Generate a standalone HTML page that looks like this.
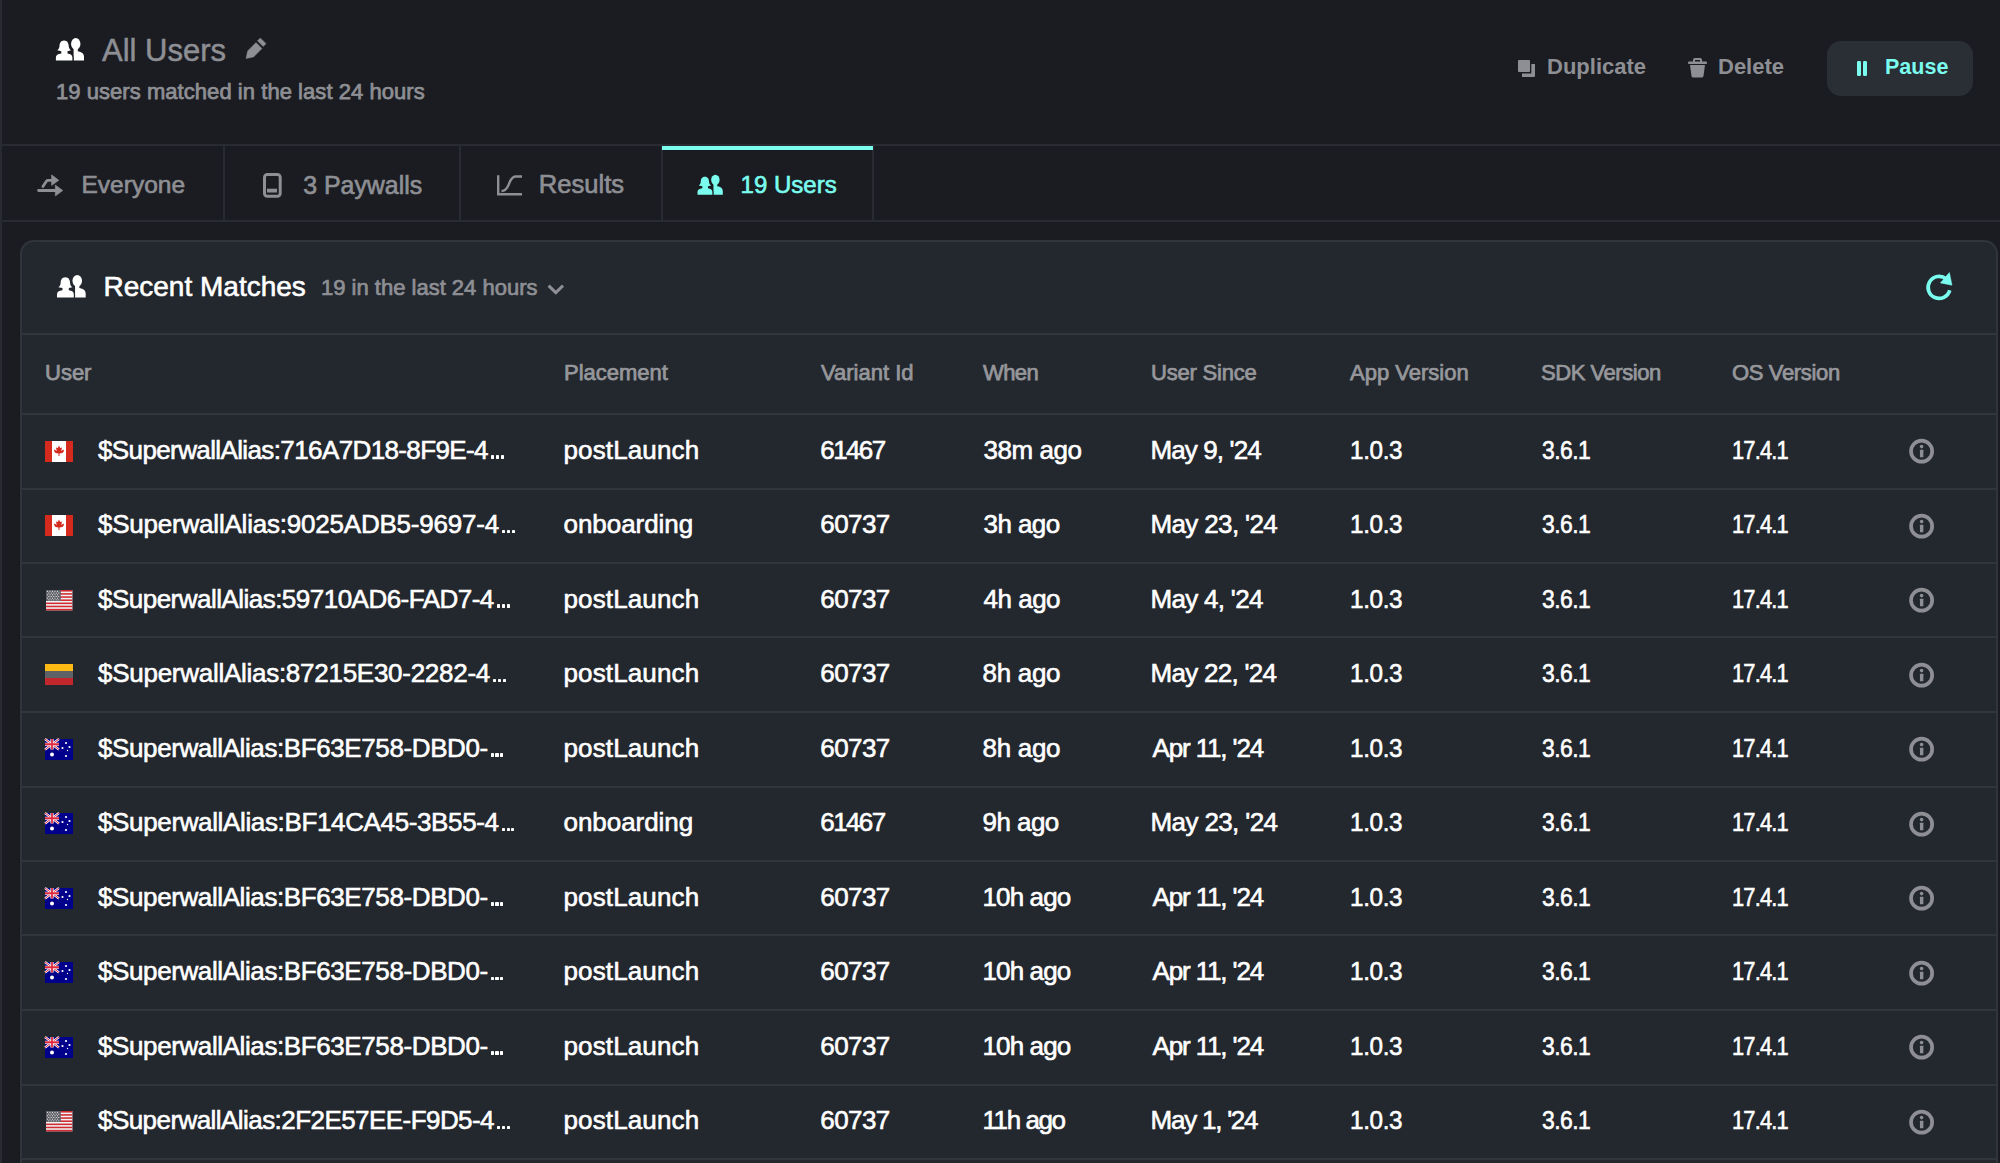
<!DOCTYPE html>
<html><head><meta charset="utf-8"><style>
*{margin:0;padding:0;box-sizing:border-box}
html,body{width:2000px;height:1163px;overflow:hidden;background:#1a1c21;font-family:"Liberation Sans", sans-serif}
.t{position:absolute;white-space:nowrap}
.i{position:absolute;overflow:visible}
.r{position:absolute}
</style></head><body>
<div class="r" style="left:0;top:0;width:2px;height:1163px;background:#282b32"></div>
<svg class="i" style="left:52.00px;top:34.00px" width="38.00" height="30.00" viewBox="0 0 38 30" preserveAspectRatio="none"><g fill="#ffffff"><ellipse cx="23.75" cy="9.9" rx="4.7" ry="5.8"/><path d="M21.6 13 H25.8 V17.2 Q31.8 18 32 22.5 V26.6 H21.6 Z"/></g><path fill="#ffffff" stroke="#1a1c21" stroke-width="2.4" paint-order="stroke" stroke-linejoin="round" d="M12.1 6.4 C8.6 6.4 7.6 9.3 7.5 12 C7.4 14 6.6 15.3 5.2 16.3 L9.3 17.2 L9.3 19.4 C5.6 19.8 3.9 21 3.9 23.6 L3.9 26.6 L20.4 26.6 L20.4 23.6 C20.4 21 18.7 19.8 15.5 19.4 L15.5 17.2 L19 16.3 C17.6 15.3 16.8 14 16.7 12 C16.6 9.3 15.6 6.4 12.1 6.4 Z"/></svg>
<div class="t" style="left:102px;top:34.76px;font-size:31px;line-height:31px;color:#8e8f94;font-weight:normal;-webkit-text-stroke:0.5px #8e8f94">All Users</div>
<svg class="i" style="left:245px;top:38px" width="21" height="21" viewBox="0 0 21 21"><path d="M11 4.6 L17 10.6 L8.6 19 L1 20.6 L2.6 13 Z M12.4 2.8 L14.8 0.4 Q15.3 -0.1 15.8 0.4 L20.6 5.2 Q21.1 5.7 20.6 6.2 L18.2 8.6 Z" fill="#8e8f94" stroke="#8e8f94" stroke-width="0.4" stroke-linejoin="round"/></svg>
<div class="t" style="left:56px;top:81.18px;font-size:22px;line-height:22px;color:#8e8f94;font-weight:normal;letter-spacing:0.05px;-webkit-text-stroke:0.75px #8e8f94">19 users matched in the last 24 hours</div>
<svg class="i" style="left:1516px;top:59px" width="20" height="19" viewBox="0 0 20 19"><rect x="2" y="1" width="12" height="12" rx="1" fill="#8e8f94"/><path d="M6 14.5 H15.3 V5 H19 V16.8 Q19 18 17.8 18 H6 Z" fill="#8e8f94"/></svg>
<div class="t" style="left:1547px;top:56.38px;font-size:22px;line-height:22px;color:#8e8f94;font-weight:bold;">Duplicate</div>
<svg class="i" style="left:1688px;top:58px" width="19" height="20" viewBox="0 0 19 20"><rect x="0" y="3.5" width="19" height="2.5" rx="1" fill="#8e8f94"/><path d="M6 4 V2 Q6 1 7 1 H12 Q13 1 13 2 V4" stroke="#8e8f94" stroke-width="2" fill="none"/><path d="M2 7 H17 L15.5 18 Q15.3 19.6 13.5 19.6 H5.5 Q3.7 19.6 3.5 18 Z" fill="#8e8f94"/></svg>
<div class="t" style="left:1718px;top:56.38px;font-size:22px;line-height:22px;color:#8e8f94;font-weight:bold;">Delete</div>
<div class="r" style="left:1827px;top:41px;width:146px;height:55px;border-radius:14px;background:#2a2e35"></div>
<div class="r" style="left:1857px;top:60.6px;width:4.2px;height:15.6px;background:#7afdef;border-radius:1.2px"></div><div class="r" style="left:1863.3px;top:60.6px;width:4.1px;height:15.6px;background:#7afdef;border-radius:1.2px"></div>
<div class="t" style="left:1885px;top:56.80px;font-size:21.5px;line-height:21.5px;color:#7afdef;font-weight:bold;">Pause</div>
<div class="r" style="left:0;top:144px;width:2000px;height:2px;background:#282b32"></div>
<div class="r" style="left:0;top:220px;width:2000px;height:2px;background:#282b32"></div>
<div class="r" style="left:223px;top:144px;width:2px;height:78px;background:#282b32"></div>
<div class="r" style="left:459px;top:144px;width:2px;height:78px;background:#282b32"></div>
<div class="r" style="left:661px;top:144px;width:2px;height:78px;background:#282b32"></div>
<div class="r" style="left:872px;top:144px;width:2px;height:78px;background:#282b32"></div>
<div class="r" style="left:662px;top:146px;width:211px;height:3.5px;background:#7afdef"></div>
<svg class="i" style="left:34px;top:170px" width="32" height="30" viewBox="0 0 32 30"><g stroke="#8e8f94" stroke-width="2.8" fill="none" stroke-linecap="round"><path d="M4.6 20.5 H22.5"/><path d="M8.9 16.6 L12.6 10.9 Q13 10.3 13.8 10.3 H18.5"/></g><path d="M21.3 15 L28.8 20.5 L21.3 26 Z M17.6 4.8 L24.8 10.3 L17.6 15.4 Z" fill="#8e8f94" stroke="#8e8f94" stroke-width="0.6" stroke-linejoin="round"/></svg>
<div class="t" style="left:81.5px;top:172.86px;font-size:24.5px;line-height:24.5px;color:#8e8f94;font-weight:normal;-webkit-text-stroke:0.65px #8e8f94">Everyone</div>
<svg class="i" style="left:263px;top:172.8px" width="19" height="25" viewBox="0 0 19 25"><rect x="1.5" y="1.5" width="15.7" height="21.7" rx="2.8" fill="none" stroke="#8e8f94" stroke-width="3"/><rect x="4" y="15.7" width="10" height="3.8" fill="#8e8f94"/></svg>
<div class="t" style="left:303.2px;top:172.52px;font-size:24.9px;line-height:24.9px;color:#8e8f94;font-weight:normal;-webkit-text-stroke:0.65px #8e8f94">3 Paywalls</div>
<svg class="i" style="left:496px;top:174px" width="27" height="23" viewBox="0 0 27 23"><g fill="none" stroke="#8e8f94" stroke-width="2.4"><path d="M2.2 1.2 V20.3 H26"/><path d="M5.5 17 Q10 17 12.5 11 Q15.5 2.5 19.5 2.5 H26"/></g></svg>
<div class="t" style="left:538.8px;top:171.93px;font-size:25.6px;line-height:25.6px;color:#8e8f94;font-weight:normal;-webkit-text-stroke:0.65px #8e8f94">Results</div>
<svg class="i" style="left:694.39px;top:171.36px" width="34.21" height="26.67" viewBox="0 0 38 30" preserveAspectRatio="none"><g fill="#7afdef"><ellipse cx="23.75" cy="9.9" rx="4.7" ry="5.8"/><path d="M21.6 13 H25.8 V17.2 Q31.8 18 32 22.5 V26.6 H21.6 Z"/></g><path fill="#7afdef" stroke="#1a1c21" stroke-width="2.4" paint-order="stroke" stroke-linejoin="round" d="M12.1 6.4 C8.6 6.4 7.6 9.3 7.5 12 C7.4 14 6.6 15.3 5.2 16.3 L9.3 17.2 L9.3 19.4 C5.6 19.8 3.9 21 3.9 23.6 L3.9 26.6 L20.4 26.6 L20.4 23.6 C20.4 21 18.7 19.8 15.5 19.4 L15.5 17.2 L19 16.3 C17.6 15.3 16.8 14 16.7 12 C16.6 9.3 15.6 6.4 12.1 6.4 Z"/></svg>
<div class="t" style="left:740.6px;top:173.28px;font-size:24px;line-height:24px;color:#7afdef;font-weight:normal;-webkit-text-stroke:0.6px #7afdef">19 Users</div>
<div class="r" style="left:20px;top:240px;width:1978px;height:1000px;border:2px solid #30343b;border-radius:14px;background:#23272e"></div>
<svg class="i" style="left:53.02px;top:271.32px" width="38.81" height="29.87" viewBox="0 0 38 30" preserveAspectRatio="none"><g fill="#ffffff"><ellipse cx="23.75" cy="9.9" rx="4.7" ry="5.8"/><path d="M21.6 13 H25.8 V17.2 Q31.8 18 32 22.5 V26.6 H21.6 Z"/></g><path fill="#ffffff" stroke="#23272e" stroke-width="2.4" paint-order="stroke" stroke-linejoin="round" d="M12.1 6.4 C8.6 6.4 7.6 9.3 7.5 12 C7.4 14 6.6 15.3 5.2 16.3 L9.3 17.2 L9.3 19.4 C5.6 19.8 3.9 21 3.9 23.6 L3.9 26.6 L20.4 26.6 L20.4 23.6 C20.4 21 18.7 19.8 15.5 19.4 L15.5 17.2 L19 16.3 C17.6 15.3 16.8 14 16.7 12 C16.6 9.3 15.6 6.4 12.1 6.4 Z"/></svg>
<div class="t" style="left:103.5px;top:273.30px;font-size:28px;line-height:28px;color:#ffffff;font-weight:normal;-webkit-text-stroke:0.6px #ffffff">Recent Matches</div>
<div class="t" style="left:321px;top:277.38px;font-size:22px;line-height:22px;color:#8e8f94;font-weight:normal;-webkit-text-stroke:0.7px #8e8f94">19 in the last 24 hours</div>
<svg class="i" style="left:547px;top:282px" width="18" height="12" viewBox="0 0 18 12"><path d="M1.6 3.6 L8.8 10.6 L16 3.6" fill="none" stroke="#8e8f94" stroke-width="3"/></svg>
<svg class="i" style="left:1915px;top:262px" width="50" height="50" viewBox="0 0 50 50"><path d="M34.73 28.25 A11 11 0 1 1 31.17 16.97" fill="none" stroke="#7afdef" stroke-width="3.7"/><path d="M34.4 10.5 L37 23.2 L25.4 20.9 Z" fill="#7afdef" stroke="#7afdef" stroke-width="0.5" stroke-linejoin="round"/></svg>
<div class="r" style="left:22px;top:333px;width:1974px;height:2px;background:#32353c"></div>
<div class="t" style="left:45px;top:362.28px;font-size:22px;line-height:22px;color:#96979b;font-weight:normal;-webkit-text-stroke:0.75px #96979b">User</div>
<div class="t" style="left:564px;top:362.28px;font-size:22px;line-height:22px;color:#96979b;font-weight:normal;-webkit-text-stroke:0.75px #96979b">Placement</div>
<div class="t" style="left:821px;top:362.28px;font-size:22px;line-height:22px;color:#96979b;font-weight:normal;-webkit-text-stroke:0.75px #96979b">Variant Id</div>
<div class="t" style="left:983px;top:362.28px;font-size:22px;line-height:22px;color:#96979b;font-weight:normal;letter-spacing:-0.6px;-webkit-text-stroke:0.75px #96979b">When</div>
<div class="t" style="left:1151px;top:362.28px;font-size:22px;line-height:22px;color:#96979b;font-weight:normal;letter-spacing:-0.2px;-webkit-text-stroke:0.75px #96979b">User Since</div>
<div class="t" style="left:1350px;top:362.28px;font-size:22px;line-height:22px;color:#96979b;font-weight:normal;-webkit-text-stroke:0.75px #96979b">App Version</div>
<div class="t" style="left:1541px;top:362.28px;font-size:22px;line-height:22px;color:#96979b;font-weight:normal;letter-spacing:-0.45px;-webkit-text-stroke:0.75px #96979b">SDK Version</div>
<div class="t" style="left:1732px;top:362.28px;font-size:22px;line-height:22px;color:#96979b;font-weight:normal;letter-spacing:-0.35px;-webkit-text-stroke:0.75px #96979b">OS Version</div>
<div class="r" style="left:22px;top:413px;width:1974px;height:2px;background:#32353c"></div>
<svg class="i" style="left:45px;top:441px" width="28" height="21" viewBox="0 0 28 21"><rect width="28" height="21" fill="#fff"/><rect width="7" height="21" fill="#d52b1e"/><rect x="21" width="7" height="21" fill="#d52b1e"/><path d="M14 4.5 L15.2 7 L17 6.5 L16.3 10 L18.5 8.5 L19 10 L17.5 12 L14.5 12.5 V15 H13.5 V12.5 L10.5 12 L9 10 L9.5 8.5 L11.7 10 L11 6.5 L12.8 7 Z" fill="#d52b1e"/></svg>
<div class="t" style="left:98.0px;top:436.74px;font-size:26px;line-height:26px;color:#ffffff;font-weight:normal;letter-spacing:-0.615px;-webkit-text-stroke:0.6px #ffffff">$SuperwallAlias:716A7D18-8F9E-4</div>
<div class="r" style="left:491.20px;top:455.45px;width:3.1px;height:3.1px;background:#ffffff;border-radius:0.4px"></div>
<div class="r" style="left:496.05px;top:455.45px;width:3.1px;height:3.1px;background:#ffffff;border-radius:0.4px"></div>
<div class="r" style="left:500.90px;top:455.45px;width:3.1px;height:3.1px;background:#ffffff;border-radius:0.4px"></div>
<div class="t" style="left:563.5px;top:436.74px;font-size:26px;line-height:26px;color:#ffffff;font-weight:normal;letter-spacing:0.135px;-webkit-text-stroke:0.6px #ffffff">postLaunch</div>
<div class="t" style="left:820.3px;top:436.74px;font-size:26px;line-height:26px;color:#ffffff;font-weight:normal;letter-spacing:-1.610px;-webkit-text-stroke:0.6px #ffffff">61467</div>
<div class="t" style="left:983.5px;top:436.74px;font-size:26px;line-height:26px;color:#ffffff;font-weight:normal;letter-spacing:-0.470px;-webkit-text-stroke:0.6px #ffffff">38m ago</div>
<div class="t" style="left:1150.5px;top:436.74px;font-size:26px;line-height:26px;color:#ffffff;font-weight:normal;letter-spacing:-0.886px;-webkit-text-stroke:0.6px #ffffff">May 9, '24</div>
<div class="t" style="left:1350.05px;top:436.74px;font-size:26px;line-height:26px;color:#ffffff;font-weight:normal;letter-spacing:-0.4px;transform:scaleX(0.9338);transform-origin:0 0;-webkit-text-stroke:0.6px #ffffff">1.0.3</div>
<div class="t" style="left:1541.96px;top:436.74px;font-size:26px;line-height:26px;color:#ffffff;font-weight:normal;letter-spacing:-0.6px;transform:scaleX(0.8818);transform-origin:0 0;-webkit-text-stroke:0.6px #ffffff">3.6.1</div>
<div class="t" style="left:1732.21px;top:436.74px;font-size:26px;line-height:26px;color:#ffffff;font-weight:normal;letter-spacing:-1.0px;transform:scaleX(0.8415);transform-origin:0 0;-webkit-text-stroke:0.6px #ffffff">17.4.1</div>
<svg class="i" style="left:1908px;top:438.25px" width="27" height="27" viewBox="0 0 27 27"><circle cx="13.6" cy="13.15" r="10.55" fill="none" stroke="#8e8f94" stroke-width="3.7"/><rect x="11.95" y="11.75" width="3.4" height="7.6" rx="0.5" fill="#8e8f94"/><circle cx="13.6" cy="8.6" r="1.8" fill="#8e8f94"/></svg>
<div class="r" style="left:22px;top:488px;width:1974px;height:2px;background:#32353c"></div>
<svg class="i" style="left:45px;top:515px" width="28" height="21" viewBox="0 0 28 21"><rect width="28" height="21" fill="#fff"/><rect width="7" height="21" fill="#d52b1e"/><rect x="21" width="7" height="21" fill="#d52b1e"/><path d="M14 4.5 L15.2 7 L17 6.5 L16.3 10 L18.5 8.5 L19 10 L17.5 12 L14.5 12.5 V15 H13.5 V12.5 L10.5 12 L9 10 L9.5 8.5 L11.7 10 L11 6.5 L12.8 7 Z" fill="#d52b1e"/></svg>
<div class="t" style="left:98.0px;top:511.24px;font-size:26px;line-height:26px;color:#ffffff;font-weight:normal;letter-spacing:-0.214px;-webkit-text-stroke:0.6px #ffffff">$SuperwallAlias:9025ADB5-9697-4</div>
<div class="r" style="left:501.80px;top:529.95px;width:3.1px;height:3.1px;background:#ffffff;border-radius:0.4px"></div>
<div class="r" style="left:506.65px;top:529.95px;width:3.1px;height:3.1px;background:#ffffff;border-radius:0.4px"></div>
<div class="r" style="left:511.50px;top:529.95px;width:3.1px;height:3.1px;background:#ffffff;border-radius:0.4px"></div>
<div class="t" style="left:563.5px;top:511.24px;font-size:26px;line-height:26px;color:#ffffff;font-weight:normal;letter-spacing:-0.050px;-webkit-text-stroke:0.6px #ffffff">onboarding</div>
<div class="t" style="left:820.3px;top:511.24px;font-size:26px;line-height:26px;color:#ffffff;font-weight:normal;letter-spacing:-0.585px;-webkit-text-stroke:0.6px #ffffff">60737</div>
<div class="t" style="left:983.5px;top:511.24px;font-size:26px;line-height:26px;color:#ffffff;font-weight:normal;letter-spacing:-0.573px;-webkit-text-stroke:0.6px #ffffff">3h ago</div>
<div class="t" style="left:1150.5px;top:511.24px;font-size:26px;line-height:26px;color:#ffffff;font-weight:normal;letter-spacing:-0.643px;-webkit-text-stroke:0.6px #ffffff">May 23, '24</div>
<div class="t" style="left:1350.05px;top:511.24px;font-size:26px;line-height:26px;color:#ffffff;font-weight:normal;letter-spacing:-0.4px;transform:scaleX(0.9338);transform-origin:0 0;-webkit-text-stroke:0.6px #ffffff">1.0.3</div>
<div class="t" style="left:1541.96px;top:511.24px;font-size:26px;line-height:26px;color:#ffffff;font-weight:normal;letter-spacing:-0.6px;transform:scaleX(0.8818);transform-origin:0 0;-webkit-text-stroke:0.6px #ffffff">3.6.1</div>
<div class="t" style="left:1732.21px;top:511.24px;font-size:26px;line-height:26px;color:#ffffff;font-weight:normal;letter-spacing:-1.0px;transform:scaleX(0.8415);transform-origin:0 0;-webkit-text-stroke:0.6px #ffffff">17.4.1</div>
<svg class="i" style="left:1908px;top:512.75px" width="27" height="27" viewBox="0 0 27 27"><circle cx="13.6" cy="13.15" r="10.55" fill="none" stroke="#8e8f94" stroke-width="3.7"/><rect x="11.95" y="11.75" width="3.4" height="7.6" rx="0.5" fill="#8e8f94"/><circle cx="13.6" cy="8.6" r="1.8" fill="#8e8f94"/></svg>
<div class="r" style="left:22px;top:562px;width:1974px;height:2px;background:#32353c"></div>
<svg class="i" style="left:46px;top:590.2px" width="26.4" height="20.4" viewBox="0 0 26.4 20.4"><rect width="26.4" height="20.4" fill="#eef4f4"/><rect y="0.00" width="26.4" height="1.57" fill="#d22a30"/><rect y="3.14" width="26.4" height="1.57" fill="#d22a30"/><rect y="6.28" width="26.4" height="1.57" fill="#d22a30"/><rect y="9.42" width="26.4" height="1.57" fill="#d22a30"/><rect y="12.55" width="26.4" height="1.57" fill="#d22a30"/><rect y="15.69" width="26.4" height="1.57" fill="#d22a30"/><rect y="18.83" width="26.4" height="1.57" fill="#d22a30"/><rect width="14.8" height="11" fill="#606168"/><rect x="1.00" y="0.90" width="1" height="1" fill="#e8e8e8"/><rect x="3.50" y="0.90" width="1" height="1" fill="#e8e8e8"/><rect x="6.00" y="0.90" width="1" height="1" fill="#e8e8e8"/><rect x="8.50" y="0.90" width="1" height="1" fill="#e8e8e8"/><rect x="11.00" y="0.90" width="1" height="1" fill="#e8e8e8"/><rect x="2.25" y="2.60" width="1" height="1" fill="#e8e8e8"/><rect x="4.75" y="2.60" width="1" height="1" fill="#e8e8e8"/><rect x="7.25" y="2.60" width="1" height="1" fill="#e8e8e8"/><rect x="9.75" y="2.60" width="1" height="1" fill="#e8e8e8"/><rect x="12.25" y="2.60" width="1" height="1" fill="#e8e8e8"/><rect x="1.00" y="4.30" width="1" height="1" fill="#e8e8e8"/><rect x="3.50" y="4.30" width="1" height="1" fill="#e8e8e8"/><rect x="6.00" y="4.30" width="1" height="1" fill="#e8e8e8"/><rect x="8.50" y="4.30" width="1" height="1" fill="#e8e8e8"/><rect x="11.00" y="4.30" width="1" height="1" fill="#e8e8e8"/><rect x="2.25" y="6.00" width="1" height="1" fill="#e8e8e8"/><rect x="4.75" y="6.00" width="1" height="1" fill="#e8e8e8"/><rect x="7.25" y="6.00" width="1" height="1" fill="#e8e8e8"/><rect x="9.75" y="6.00" width="1" height="1" fill="#e8e8e8"/><rect x="12.25" y="6.00" width="1" height="1" fill="#e8e8e8"/><rect x="1.00" y="7.70" width="1" height="1" fill="#e8e8e8"/><rect x="3.50" y="7.70" width="1" height="1" fill="#e8e8e8"/><rect x="6.00" y="7.70" width="1" height="1" fill="#e8e8e8"/><rect x="8.50" y="7.70" width="1" height="1" fill="#e8e8e8"/><rect x="11.00" y="7.70" width="1" height="1" fill="#e8e8e8"/><rect x="2.25" y="9.40" width="1" height="1" fill="#e8e8e8"/><rect x="4.75" y="9.40" width="1" height="1" fill="#e8e8e8"/><rect x="7.25" y="9.40" width="1" height="1" fill="#e8e8e8"/><rect x="9.75" y="9.40" width="1" height="1" fill="#e8e8e8"/><rect x="12.25" y="9.40" width="1" height="1" fill="#e8e8e8"/></svg>
<div class="t" style="left:98.0px;top:585.74px;font-size:26px;line-height:26px;color:#ffffff;font-weight:normal;letter-spacing:-0.521px;-webkit-text-stroke:0.6px #ffffff">$SuperwallAlias:59710AD6-FAD7-4</div>
<div class="r" style="left:496.90px;top:604.45px;width:3.1px;height:3.1px;background:#ffffff;border-radius:0.4px"></div>
<div class="r" style="left:501.75px;top:604.45px;width:3.1px;height:3.1px;background:#ffffff;border-radius:0.4px"></div>
<div class="r" style="left:506.60px;top:604.45px;width:3.1px;height:3.1px;background:#ffffff;border-radius:0.4px"></div>
<div class="t" style="left:563.5px;top:585.74px;font-size:26px;line-height:26px;color:#ffffff;font-weight:normal;letter-spacing:0.135px;-webkit-text-stroke:0.6px #ffffff">postLaunch</div>
<div class="t" style="left:820.3px;top:585.74px;font-size:26px;line-height:26px;color:#ffffff;font-weight:normal;letter-spacing:-0.585px;-webkit-text-stroke:0.6px #ffffff">60737</div>
<div class="t" style="left:983.5px;top:585.74px;font-size:26px;line-height:26px;color:#ffffff;font-weight:normal;letter-spacing:-0.493px;-webkit-text-stroke:0.6px #ffffff">4h ago</div>
<div class="t" style="left:1150.5px;top:585.74px;font-size:26px;line-height:26px;color:#ffffff;font-weight:normal;letter-spacing:-0.697px;-webkit-text-stroke:0.6px #ffffff">May 4, '24</div>
<div class="t" style="left:1350.05px;top:585.74px;font-size:26px;line-height:26px;color:#ffffff;font-weight:normal;letter-spacing:-0.4px;transform:scaleX(0.9338);transform-origin:0 0;-webkit-text-stroke:0.6px #ffffff">1.0.3</div>
<div class="t" style="left:1541.96px;top:585.74px;font-size:26px;line-height:26px;color:#ffffff;font-weight:normal;letter-spacing:-0.6px;transform:scaleX(0.8818);transform-origin:0 0;-webkit-text-stroke:0.6px #ffffff">3.6.1</div>
<div class="t" style="left:1732.21px;top:585.74px;font-size:26px;line-height:26px;color:#ffffff;font-weight:normal;letter-spacing:-1.0px;transform:scaleX(0.8415);transform-origin:0 0;-webkit-text-stroke:0.6px #ffffff">17.4.1</div>
<svg class="i" style="left:1908px;top:587.25px" width="27" height="27" viewBox="0 0 27 27"><circle cx="13.6" cy="13.15" r="10.55" fill="none" stroke="#8e8f94" stroke-width="3.7"/><rect x="11.95" y="11.75" width="3.4" height="7.6" rx="0.5" fill="#8e8f94"/><circle cx="13.6" cy="8.6" r="1.8" fill="#8e8f94"/></svg>
<div class="r" style="left:22px;top:636px;width:1974px;height:2px;background:#32353c"></div>
<svg class="i" style="left:45px;top:664px" width="28" height="21" viewBox="0 0 28 21"><rect width="28" height="7" fill="#fdb913"/><rect y="7" width="28" height="7" fill="#5e6166"/><rect y="14" width="28" height="7" fill="#c1272d"/></svg>
<div class="t" style="left:98.0px;top:660.24px;font-size:26px;line-height:26px;color:#ffffff;font-weight:normal;letter-spacing:-0.271px;-webkit-text-stroke:0.6px #ffffff">$SuperwallAlias:87215E30-2282-4</div>
<div class="r" style="left:492.90px;top:678.95px;width:3.1px;height:3.1px;background:#ffffff;border-radius:0.4px"></div>
<div class="r" style="left:497.75px;top:678.95px;width:3.1px;height:3.1px;background:#ffffff;border-radius:0.4px"></div>
<div class="r" style="left:502.60px;top:678.95px;width:3.1px;height:3.1px;background:#ffffff;border-radius:0.4px"></div>
<div class="t" style="left:563.5px;top:660.24px;font-size:26px;line-height:26px;color:#ffffff;font-weight:normal;letter-spacing:0.135px;-webkit-text-stroke:0.6px #ffffff">postLaunch</div>
<div class="t" style="left:820.3px;top:660.24px;font-size:26px;line-height:26px;color:#ffffff;font-weight:normal;letter-spacing:-0.585px;-webkit-text-stroke:0.6px #ffffff">60737</div>
<div class="t" style="left:982.5px;top:660.24px;font-size:26px;line-height:26px;color:#ffffff;font-weight:normal;letter-spacing:-0.293px;-webkit-text-stroke:0.6px #ffffff">8h ago</div>
<div class="t" style="left:1150.5px;top:660.24px;font-size:26px;line-height:26px;color:#ffffff;font-weight:normal;letter-spacing:-0.723px;-webkit-text-stroke:0.6px #ffffff">May 22, '24</div>
<div class="t" style="left:1350.05px;top:660.24px;font-size:26px;line-height:26px;color:#ffffff;font-weight:normal;letter-spacing:-0.4px;transform:scaleX(0.9338);transform-origin:0 0;-webkit-text-stroke:0.6px #ffffff">1.0.3</div>
<div class="t" style="left:1541.96px;top:660.24px;font-size:26px;line-height:26px;color:#ffffff;font-weight:normal;letter-spacing:-0.6px;transform:scaleX(0.8818);transform-origin:0 0;-webkit-text-stroke:0.6px #ffffff">3.6.1</div>
<div class="t" style="left:1732.21px;top:660.24px;font-size:26px;line-height:26px;color:#ffffff;font-weight:normal;letter-spacing:-1.0px;transform:scaleX(0.8415);transform-origin:0 0;-webkit-text-stroke:0.6px #ffffff">17.4.1</div>
<svg class="i" style="left:1908px;top:661.75px" width="27" height="27" viewBox="0 0 27 27"><circle cx="13.6" cy="13.15" r="10.55" fill="none" stroke="#8e8f94" stroke-width="3.7"/><rect x="11.95" y="11.75" width="3.4" height="7.6" rx="0.5" fill="#8e8f94"/><circle cx="13.6" cy="8.6" r="1.8" fill="#8e8f94"/></svg>
<div class="r" style="left:22px;top:711px;width:1974px;height:2px;background:#32353c"></div>
<svg class="i" style="left:45px;top:739px" width="28" height="21" viewBox="0 0 28 21"><rect width="28" height="21" fill="#00008b"/><g stroke="#fff" stroke-width="2.2"><path d="M0 0 L14 10.5 M14 0 L0 10.5"/></g><g stroke="#e0283c" stroke-width="1"><path d="M0 0 L14 10.5 M14 0 L0 10.5"/></g><path d="M7 0 V10.5 M0 5.25 H14" stroke="#fff" stroke-width="3.2"/><path d="M7 0 V10.5 M0 5.25 H14" stroke="#e0283c" stroke-width="1.8"/><circle cx="7" cy="15.5" r="2" fill="#fff"/><circle cx="21" cy="4" r="1.1" fill="#fff"/><circle cx="24.5" cy="8" r="1.1" fill="#fff"/><circle cx="17.5" cy="9" r="1.1" fill="#fff"/><circle cx="21" cy="17" r="1.1" fill="#fff"/><circle cx="22.5" cy="11.5" r="0.7" fill="#fff"/></svg>
<div class="t" style="left:98.0px;top:734.74px;font-size:26px;line-height:26px;color:#ffffff;font-weight:normal;letter-spacing:-0.399px;-webkit-text-stroke:0.6px #ffffff">$SuperwallAlias:BF63E758-DBD0-</div>
<div class="r" style="left:490.60px;top:753.45px;width:3.1px;height:3.1px;background:#ffffff;border-radius:0.4px"></div>
<div class="r" style="left:495.45px;top:753.45px;width:3.1px;height:3.1px;background:#ffffff;border-radius:0.4px"></div>
<div class="r" style="left:500.30px;top:753.45px;width:3.1px;height:3.1px;background:#ffffff;border-radius:0.4px"></div>
<div class="t" style="left:563.5px;top:734.74px;font-size:26px;line-height:26px;color:#ffffff;font-weight:normal;letter-spacing:0.135px;-webkit-text-stroke:0.6px #ffffff">postLaunch</div>
<div class="t" style="left:820.3px;top:734.74px;font-size:26px;line-height:26px;color:#ffffff;font-weight:normal;letter-spacing:-0.585px;-webkit-text-stroke:0.6px #ffffff">60737</div>
<div class="t" style="left:982.5px;top:734.74px;font-size:26px;line-height:26px;color:#ffffff;font-weight:normal;letter-spacing:-0.293px;-webkit-text-stroke:0.6px #ffffff">8h ago</div>
<div class="t" style="left:1152.5px;top:734.74px;font-size:26px;line-height:26px;color:#ffffff;font-weight:normal;letter-spacing:-1.134px;-webkit-text-stroke:0.6px #ffffff">Apr 11, '24</div>
<div class="t" style="left:1350.05px;top:734.74px;font-size:26px;line-height:26px;color:#ffffff;font-weight:normal;letter-spacing:-0.4px;transform:scaleX(0.9338);transform-origin:0 0;-webkit-text-stroke:0.6px #ffffff">1.0.3</div>
<div class="t" style="left:1541.96px;top:734.74px;font-size:26px;line-height:26px;color:#ffffff;font-weight:normal;letter-spacing:-0.6px;transform:scaleX(0.8818);transform-origin:0 0;-webkit-text-stroke:0.6px #ffffff">3.6.1</div>
<div class="t" style="left:1732.21px;top:734.74px;font-size:26px;line-height:26px;color:#ffffff;font-weight:normal;letter-spacing:-1.0px;transform:scaleX(0.8415);transform-origin:0 0;-webkit-text-stroke:0.6px #ffffff">17.4.1</div>
<svg class="i" style="left:1908px;top:736.25px" width="27" height="27" viewBox="0 0 27 27"><circle cx="13.6" cy="13.15" r="10.55" fill="none" stroke="#8e8f94" stroke-width="3.7"/><rect x="11.95" y="11.75" width="3.4" height="7.6" rx="0.5" fill="#8e8f94"/><circle cx="13.6" cy="8.6" r="1.8" fill="#8e8f94"/></svg>
<div class="r" style="left:22px;top:786px;width:1974px;height:2px;background:#32353c"></div>
<svg class="i" style="left:45px;top:813px" width="28" height="21" viewBox="0 0 28 21"><rect width="28" height="21" fill="#00008b"/><g stroke="#fff" stroke-width="2.2"><path d="M0 0 L14 10.5 M14 0 L0 10.5"/></g><g stroke="#e0283c" stroke-width="1"><path d="M0 0 L14 10.5 M14 0 L0 10.5"/></g><path d="M7 0 V10.5 M0 5.25 H14" stroke="#fff" stroke-width="3.2"/><path d="M7 0 V10.5 M0 5.25 H14" stroke="#e0283c" stroke-width="1.8"/><circle cx="7" cy="15.5" r="2" fill="#fff"/><circle cx="21" cy="4" r="1.1" fill="#fff"/><circle cx="24.5" cy="8" r="1.1" fill="#fff"/><circle cx="17.5" cy="9" r="1.1" fill="#fff"/><circle cx="21" cy="17" r="1.1" fill="#fff"/><circle cx="22.5" cy="11.5" r="0.7" fill="#fff"/></svg>
<div class="t" style="left:98.0px;top:809.24px;font-size:26px;line-height:26px;color:#ffffff;font-weight:normal;letter-spacing:-0.361px;-webkit-text-stroke:0.6px #ffffff">$SuperwallAlias:BF14CA45-3B55-4</div>
<div class="r" style="left:501.70px;top:827.95px;width:3.1px;height:3.1px;background:#ffffff;border-radius:0.4px"></div>
<div class="r" style="left:506.55px;top:827.95px;width:3.1px;height:3.1px;background:#ffffff;border-radius:0.4px"></div>
<div class="r" style="left:511.40px;top:827.95px;width:3.1px;height:3.1px;background:#ffffff;border-radius:0.4px"></div>
<div class="t" style="left:563.5px;top:809.24px;font-size:26px;line-height:26px;color:#ffffff;font-weight:normal;letter-spacing:-0.050px;-webkit-text-stroke:0.6px #ffffff">onboarding</div>
<div class="t" style="left:820.3px;top:809.24px;font-size:26px;line-height:26px;color:#ffffff;font-weight:normal;letter-spacing:-1.610px;-webkit-text-stroke:0.6px #ffffff">61467</div>
<div class="t" style="left:982.5px;top:809.24px;font-size:26px;line-height:26px;color:#ffffff;font-weight:normal;letter-spacing:-0.553px;-webkit-text-stroke:0.6px #ffffff">9h ago</div>
<div class="t" style="left:1150.5px;top:809.24px;font-size:26px;line-height:26px;color:#ffffff;font-weight:normal;letter-spacing:-0.613px;-webkit-text-stroke:0.6px #ffffff">May 23, '24</div>
<div class="t" style="left:1350.05px;top:809.24px;font-size:26px;line-height:26px;color:#ffffff;font-weight:normal;letter-spacing:-0.4px;transform:scaleX(0.9338);transform-origin:0 0;-webkit-text-stroke:0.6px #ffffff">1.0.3</div>
<div class="t" style="left:1541.96px;top:809.24px;font-size:26px;line-height:26px;color:#ffffff;font-weight:normal;letter-spacing:-0.6px;transform:scaleX(0.8818);transform-origin:0 0;-webkit-text-stroke:0.6px #ffffff">3.6.1</div>
<div class="t" style="left:1732.21px;top:809.24px;font-size:26px;line-height:26px;color:#ffffff;font-weight:normal;letter-spacing:-1.0px;transform:scaleX(0.8415);transform-origin:0 0;-webkit-text-stroke:0.6px #ffffff">17.4.1</div>
<svg class="i" style="left:1908px;top:810.75px" width="27" height="27" viewBox="0 0 27 27"><circle cx="13.6" cy="13.15" r="10.55" fill="none" stroke="#8e8f94" stroke-width="3.7"/><rect x="11.95" y="11.75" width="3.4" height="7.6" rx="0.5" fill="#8e8f94"/><circle cx="13.6" cy="8.6" r="1.8" fill="#8e8f94"/></svg>
<div class="r" style="left:22px;top:860px;width:1974px;height:2px;background:#32353c"></div>
<svg class="i" style="left:45px;top:888px" width="28" height="21" viewBox="0 0 28 21"><rect width="28" height="21" fill="#00008b"/><g stroke="#fff" stroke-width="2.2"><path d="M0 0 L14 10.5 M14 0 L0 10.5"/></g><g stroke="#e0283c" stroke-width="1"><path d="M0 0 L14 10.5 M14 0 L0 10.5"/></g><path d="M7 0 V10.5 M0 5.25 H14" stroke="#fff" stroke-width="3.2"/><path d="M7 0 V10.5 M0 5.25 H14" stroke="#e0283c" stroke-width="1.8"/><circle cx="7" cy="15.5" r="2" fill="#fff"/><circle cx="21" cy="4" r="1.1" fill="#fff"/><circle cx="24.5" cy="8" r="1.1" fill="#fff"/><circle cx="17.5" cy="9" r="1.1" fill="#fff"/><circle cx="21" cy="17" r="1.1" fill="#fff"/><circle cx="22.5" cy="11.5" r="0.7" fill="#fff"/></svg>
<div class="t" style="left:98.0px;top:883.74px;font-size:26px;line-height:26px;color:#ffffff;font-weight:normal;letter-spacing:-0.399px;-webkit-text-stroke:0.6px #ffffff">$SuperwallAlias:BF63E758-DBD0-</div>
<div class="r" style="left:490.60px;top:902.45px;width:3.1px;height:3.1px;background:#ffffff;border-radius:0.4px"></div>
<div class="r" style="left:495.45px;top:902.45px;width:3.1px;height:3.1px;background:#ffffff;border-radius:0.4px"></div>
<div class="r" style="left:500.30px;top:902.45px;width:3.1px;height:3.1px;background:#ffffff;border-radius:0.4px"></div>
<div class="t" style="left:563.5px;top:883.74px;font-size:26px;line-height:26px;color:#ffffff;font-weight:normal;letter-spacing:0.135px;-webkit-text-stroke:0.6px #ffffff">postLaunch</div>
<div class="t" style="left:820.3px;top:883.74px;font-size:26px;line-height:26px;color:#ffffff;font-weight:normal;letter-spacing:-0.585px;-webkit-text-stroke:0.6px #ffffff">60737</div>
<div class="t" style="left:982.5px;top:883.74px;font-size:26px;line-height:26px;color:#ffffff;font-weight:normal;letter-spacing:-0.887px;-webkit-text-stroke:0.6px #ffffff">10h ago</div>
<div class="t" style="left:1152.5px;top:883.74px;font-size:26px;line-height:26px;color:#ffffff;font-weight:normal;letter-spacing:-1.134px;-webkit-text-stroke:0.6px #ffffff">Apr 11, '24</div>
<div class="t" style="left:1350.05px;top:883.74px;font-size:26px;line-height:26px;color:#ffffff;font-weight:normal;letter-spacing:-0.4px;transform:scaleX(0.9338);transform-origin:0 0;-webkit-text-stroke:0.6px #ffffff">1.0.3</div>
<div class="t" style="left:1541.96px;top:883.74px;font-size:26px;line-height:26px;color:#ffffff;font-weight:normal;letter-spacing:-0.6px;transform:scaleX(0.8818);transform-origin:0 0;-webkit-text-stroke:0.6px #ffffff">3.6.1</div>
<div class="t" style="left:1732.21px;top:883.74px;font-size:26px;line-height:26px;color:#ffffff;font-weight:normal;letter-spacing:-1.0px;transform:scaleX(0.8415);transform-origin:0 0;-webkit-text-stroke:0.6px #ffffff">17.4.1</div>
<svg class="i" style="left:1908px;top:885.25px" width="27" height="27" viewBox="0 0 27 27"><circle cx="13.6" cy="13.15" r="10.55" fill="none" stroke="#8e8f94" stroke-width="3.7"/><rect x="11.95" y="11.75" width="3.4" height="7.6" rx="0.5" fill="#8e8f94"/><circle cx="13.6" cy="8.6" r="1.8" fill="#8e8f94"/></svg>
<div class="r" style="left:22px;top:934px;width:1974px;height:2px;background:#32353c"></div>
<svg class="i" style="left:45px;top:962px" width="28" height="21" viewBox="0 0 28 21"><rect width="28" height="21" fill="#00008b"/><g stroke="#fff" stroke-width="2.2"><path d="M0 0 L14 10.5 M14 0 L0 10.5"/></g><g stroke="#e0283c" stroke-width="1"><path d="M0 0 L14 10.5 M14 0 L0 10.5"/></g><path d="M7 0 V10.5 M0 5.25 H14" stroke="#fff" stroke-width="3.2"/><path d="M7 0 V10.5 M0 5.25 H14" stroke="#e0283c" stroke-width="1.8"/><circle cx="7" cy="15.5" r="2" fill="#fff"/><circle cx="21" cy="4" r="1.1" fill="#fff"/><circle cx="24.5" cy="8" r="1.1" fill="#fff"/><circle cx="17.5" cy="9" r="1.1" fill="#fff"/><circle cx="21" cy="17" r="1.1" fill="#fff"/><circle cx="22.5" cy="11.5" r="0.7" fill="#fff"/></svg>
<div class="t" style="left:98.0px;top:958.24px;font-size:26px;line-height:26px;color:#ffffff;font-weight:normal;letter-spacing:-0.399px;-webkit-text-stroke:0.6px #ffffff">$SuperwallAlias:BF63E758-DBD0-</div>
<div class="r" style="left:490.60px;top:976.95px;width:3.1px;height:3.1px;background:#ffffff;border-radius:0.4px"></div>
<div class="r" style="left:495.45px;top:976.95px;width:3.1px;height:3.1px;background:#ffffff;border-radius:0.4px"></div>
<div class="r" style="left:500.30px;top:976.95px;width:3.1px;height:3.1px;background:#ffffff;border-radius:0.4px"></div>
<div class="t" style="left:563.5px;top:958.24px;font-size:26px;line-height:26px;color:#ffffff;font-weight:normal;letter-spacing:0.135px;-webkit-text-stroke:0.6px #ffffff">postLaunch</div>
<div class="t" style="left:820.3px;top:958.24px;font-size:26px;line-height:26px;color:#ffffff;font-weight:normal;letter-spacing:-0.585px;-webkit-text-stroke:0.6px #ffffff">60737</div>
<div class="t" style="left:982.5px;top:958.24px;font-size:26px;line-height:26px;color:#ffffff;font-weight:normal;letter-spacing:-0.887px;-webkit-text-stroke:0.6px #ffffff">10h ago</div>
<div class="t" style="left:1152.5px;top:958.24px;font-size:26px;line-height:26px;color:#ffffff;font-weight:normal;letter-spacing:-1.134px;-webkit-text-stroke:0.6px #ffffff">Apr 11, '24</div>
<div class="t" style="left:1350.05px;top:958.24px;font-size:26px;line-height:26px;color:#ffffff;font-weight:normal;letter-spacing:-0.4px;transform:scaleX(0.9338);transform-origin:0 0;-webkit-text-stroke:0.6px #ffffff">1.0.3</div>
<div class="t" style="left:1541.96px;top:958.24px;font-size:26px;line-height:26px;color:#ffffff;font-weight:normal;letter-spacing:-0.6px;transform:scaleX(0.8818);transform-origin:0 0;-webkit-text-stroke:0.6px #ffffff">3.6.1</div>
<div class="t" style="left:1732.21px;top:958.24px;font-size:26px;line-height:26px;color:#ffffff;font-weight:normal;letter-spacing:-1.0px;transform:scaleX(0.8415);transform-origin:0 0;-webkit-text-stroke:0.6px #ffffff">17.4.1</div>
<svg class="i" style="left:1908px;top:959.75px" width="27" height="27" viewBox="0 0 27 27"><circle cx="13.6" cy="13.15" r="10.55" fill="none" stroke="#8e8f94" stroke-width="3.7"/><rect x="11.95" y="11.75" width="3.4" height="7.6" rx="0.5" fill="#8e8f94"/><circle cx="13.6" cy="8.6" r="1.8" fill="#8e8f94"/></svg>
<div class="r" style="left:22px;top:1009px;width:1974px;height:2px;background:#32353c"></div>
<svg class="i" style="left:45px;top:1037px" width="28" height="21" viewBox="0 0 28 21"><rect width="28" height="21" fill="#00008b"/><g stroke="#fff" stroke-width="2.2"><path d="M0 0 L14 10.5 M14 0 L0 10.5"/></g><g stroke="#e0283c" stroke-width="1"><path d="M0 0 L14 10.5 M14 0 L0 10.5"/></g><path d="M7 0 V10.5 M0 5.25 H14" stroke="#fff" stroke-width="3.2"/><path d="M7 0 V10.5 M0 5.25 H14" stroke="#e0283c" stroke-width="1.8"/><circle cx="7" cy="15.5" r="2" fill="#fff"/><circle cx="21" cy="4" r="1.1" fill="#fff"/><circle cx="24.5" cy="8" r="1.1" fill="#fff"/><circle cx="17.5" cy="9" r="1.1" fill="#fff"/><circle cx="21" cy="17" r="1.1" fill="#fff"/><circle cx="22.5" cy="11.5" r="0.7" fill="#fff"/></svg>
<div class="t" style="left:98.0px;top:1032.74px;font-size:26px;line-height:26px;color:#ffffff;font-weight:normal;letter-spacing:-0.399px;-webkit-text-stroke:0.6px #ffffff">$SuperwallAlias:BF63E758-DBD0-</div>
<div class="r" style="left:490.60px;top:1051.45px;width:3.1px;height:3.1px;background:#ffffff;border-radius:0.4px"></div>
<div class="r" style="left:495.45px;top:1051.45px;width:3.1px;height:3.1px;background:#ffffff;border-radius:0.4px"></div>
<div class="r" style="left:500.30px;top:1051.45px;width:3.1px;height:3.1px;background:#ffffff;border-radius:0.4px"></div>
<div class="t" style="left:563.5px;top:1032.74px;font-size:26px;line-height:26px;color:#ffffff;font-weight:normal;letter-spacing:0.135px;-webkit-text-stroke:0.6px #ffffff">postLaunch</div>
<div class="t" style="left:820.3px;top:1032.74px;font-size:26px;line-height:26px;color:#ffffff;font-weight:normal;letter-spacing:-0.585px;-webkit-text-stroke:0.6px #ffffff">60737</div>
<div class="t" style="left:982.5px;top:1032.74px;font-size:26px;line-height:26px;color:#ffffff;font-weight:normal;letter-spacing:-0.887px;-webkit-text-stroke:0.6px #ffffff">10h ago</div>
<div class="t" style="left:1152.5px;top:1032.74px;font-size:26px;line-height:26px;color:#ffffff;font-weight:normal;letter-spacing:-1.134px;-webkit-text-stroke:0.6px #ffffff">Apr 11, '24</div>
<div class="t" style="left:1350.05px;top:1032.74px;font-size:26px;line-height:26px;color:#ffffff;font-weight:normal;letter-spacing:-0.4px;transform:scaleX(0.9338);transform-origin:0 0;-webkit-text-stroke:0.6px #ffffff">1.0.3</div>
<div class="t" style="left:1541.96px;top:1032.74px;font-size:26px;line-height:26px;color:#ffffff;font-weight:normal;letter-spacing:-0.6px;transform:scaleX(0.8818);transform-origin:0 0;-webkit-text-stroke:0.6px #ffffff">3.6.1</div>
<div class="t" style="left:1732.21px;top:1032.74px;font-size:26px;line-height:26px;color:#ffffff;font-weight:normal;letter-spacing:-1.0px;transform:scaleX(0.8415);transform-origin:0 0;-webkit-text-stroke:0.6px #ffffff">17.4.1</div>
<svg class="i" style="left:1908px;top:1034.25px" width="27" height="27" viewBox="0 0 27 27"><circle cx="13.6" cy="13.15" r="10.55" fill="none" stroke="#8e8f94" stroke-width="3.7"/><rect x="11.95" y="11.75" width="3.4" height="7.6" rx="0.5" fill="#8e8f94"/><circle cx="13.6" cy="8.6" r="1.8" fill="#8e8f94"/></svg>
<div class="r" style="left:22px;top:1084px;width:1974px;height:2px;background:#32353c"></div>
<svg class="i" style="left:46px;top:1111.2px" width="26.4" height="20.4" viewBox="0 0 26.4 20.4"><rect width="26.4" height="20.4" fill="#eef4f4"/><rect y="0.00" width="26.4" height="1.57" fill="#d22a30"/><rect y="3.14" width="26.4" height="1.57" fill="#d22a30"/><rect y="6.28" width="26.4" height="1.57" fill="#d22a30"/><rect y="9.42" width="26.4" height="1.57" fill="#d22a30"/><rect y="12.55" width="26.4" height="1.57" fill="#d22a30"/><rect y="15.69" width="26.4" height="1.57" fill="#d22a30"/><rect y="18.83" width="26.4" height="1.57" fill="#d22a30"/><rect width="14.8" height="11" fill="#606168"/><rect x="1.00" y="0.90" width="1" height="1" fill="#e8e8e8"/><rect x="3.50" y="0.90" width="1" height="1" fill="#e8e8e8"/><rect x="6.00" y="0.90" width="1" height="1" fill="#e8e8e8"/><rect x="8.50" y="0.90" width="1" height="1" fill="#e8e8e8"/><rect x="11.00" y="0.90" width="1" height="1" fill="#e8e8e8"/><rect x="2.25" y="2.60" width="1" height="1" fill="#e8e8e8"/><rect x="4.75" y="2.60" width="1" height="1" fill="#e8e8e8"/><rect x="7.25" y="2.60" width="1" height="1" fill="#e8e8e8"/><rect x="9.75" y="2.60" width="1" height="1" fill="#e8e8e8"/><rect x="12.25" y="2.60" width="1" height="1" fill="#e8e8e8"/><rect x="1.00" y="4.30" width="1" height="1" fill="#e8e8e8"/><rect x="3.50" y="4.30" width="1" height="1" fill="#e8e8e8"/><rect x="6.00" y="4.30" width="1" height="1" fill="#e8e8e8"/><rect x="8.50" y="4.30" width="1" height="1" fill="#e8e8e8"/><rect x="11.00" y="4.30" width="1" height="1" fill="#e8e8e8"/><rect x="2.25" y="6.00" width="1" height="1" fill="#e8e8e8"/><rect x="4.75" y="6.00" width="1" height="1" fill="#e8e8e8"/><rect x="7.25" y="6.00" width="1" height="1" fill="#e8e8e8"/><rect x="9.75" y="6.00" width="1" height="1" fill="#e8e8e8"/><rect x="12.25" y="6.00" width="1" height="1" fill="#e8e8e8"/><rect x="1.00" y="7.70" width="1" height="1" fill="#e8e8e8"/><rect x="3.50" y="7.70" width="1" height="1" fill="#e8e8e8"/><rect x="6.00" y="7.70" width="1" height="1" fill="#e8e8e8"/><rect x="8.50" y="7.70" width="1" height="1" fill="#e8e8e8"/><rect x="11.00" y="7.70" width="1" height="1" fill="#e8e8e8"/><rect x="2.25" y="9.40" width="1" height="1" fill="#e8e8e8"/><rect x="4.75" y="9.40" width="1" height="1" fill="#e8e8e8"/><rect x="7.25" y="9.40" width="1" height="1" fill="#e8e8e8"/><rect x="9.75" y="9.40" width="1" height="1" fill="#e8e8e8"/><rect x="12.25" y="9.40" width="1" height="1" fill="#e8e8e8"/></svg>
<div class="t" style="left:98.0px;top:1107.24px;font-size:26px;line-height:26px;color:#ffffff;font-weight:normal;letter-spacing:-0.558px;-webkit-text-stroke:0.6px #ffffff">$SuperwallAlias:2F2E57EE-F9D5-4</div>
<div class="r" style="left:497.20px;top:1125.95px;width:3.1px;height:3.1px;background:#ffffff;border-radius:0.4px"></div>
<div class="r" style="left:502.05px;top:1125.95px;width:3.1px;height:3.1px;background:#ffffff;border-radius:0.4px"></div>
<div class="r" style="left:506.90px;top:1125.95px;width:3.1px;height:3.1px;background:#ffffff;border-radius:0.4px"></div>
<div class="t" style="left:563.5px;top:1107.24px;font-size:26px;line-height:26px;color:#ffffff;font-weight:normal;letter-spacing:0.135px;-webkit-text-stroke:0.6px #ffffff">postLaunch</div>
<div class="t" style="left:820.3px;top:1107.24px;font-size:26px;line-height:26px;color:#ffffff;font-weight:normal;letter-spacing:-0.585px;-webkit-text-stroke:0.6px #ffffff">60737</div>
<div class="t" style="left:982.5px;top:1107.24px;font-size:26px;line-height:26px;color:#ffffff;font-weight:normal;letter-spacing:-1.432px;-webkit-text-stroke:0.6px #ffffff">11h ago</div>
<div class="t" style="left:1150.5px;top:1107.24px;font-size:26px;line-height:26px;color:#ffffff;font-weight:normal;letter-spacing:-1.230px;-webkit-text-stroke:0.6px #ffffff">May 1, '24</div>
<div class="t" style="left:1350.05px;top:1107.24px;font-size:26px;line-height:26px;color:#ffffff;font-weight:normal;letter-spacing:-0.4px;transform:scaleX(0.9338);transform-origin:0 0;-webkit-text-stroke:0.6px #ffffff">1.0.3</div>
<div class="t" style="left:1541.96px;top:1107.24px;font-size:26px;line-height:26px;color:#ffffff;font-weight:normal;letter-spacing:-0.6px;transform:scaleX(0.8818);transform-origin:0 0;-webkit-text-stroke:0.6px #ffffff">3.6.1</div>
<div class="t" style="left:1732.21px;top:1107.24px;font-size:26px;line-height:26px;color:#ffffff;font-weight:normal;letter-spacing:-1.0px;transform:scaleX(0.8415);transform-origin:0 0;-webkit-text-stroke:0.6px #ffffff">17.4.1</div>
<svg class="i" style="left:1908px;top:1108.75px" width="27" height="27" viewBox="0 0 27 27"><circle cx="13.6" cy="13.15" r="10.55" fill="none" stroke="#8e8f94" stroke-width="3.7"/><rect x="11.95" y="11.75" width="3.4" height="7.6" rx="0.5" fill="#8e8f94"/><circle cx="13.6" cy="8.6" r="1.8" fill="#8e8f94"/></svg>
<div class="r" style="left:22px;top:1158px;width:1974px;height:2px;background:#32353c"></div>
</body></html>
